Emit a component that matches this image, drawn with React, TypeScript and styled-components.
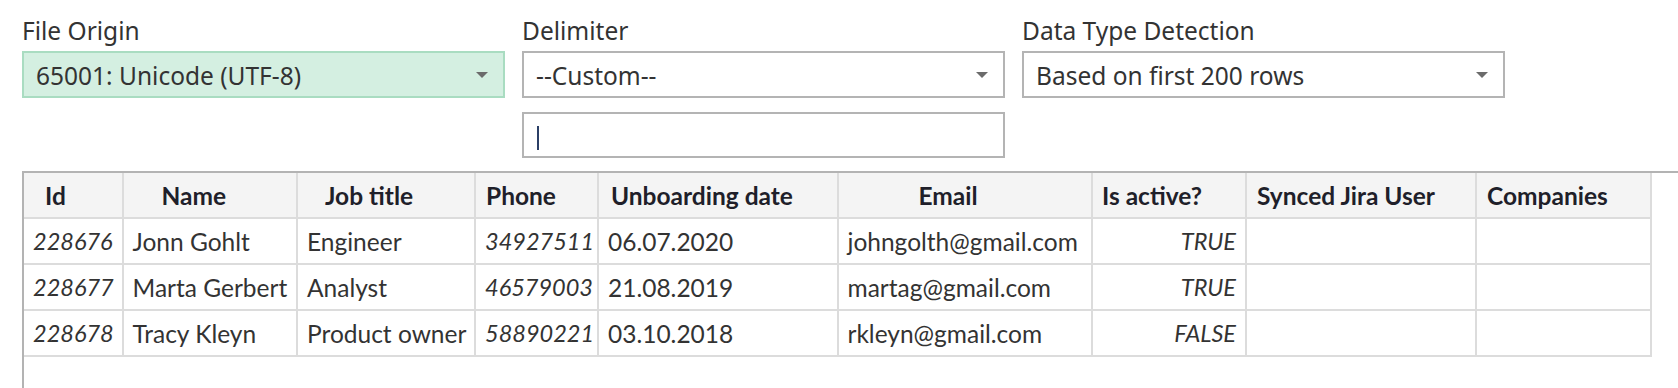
import { FC } from 'react'
import styled, { createGlobalStyle } from 'styled-components'

const GlobalStyle = createGlobalStyle`
  html, body {
    margin: 0;
    padding: 0;
    background: #ffffff;
  }

  body {
    font-family: 'Noto Sans', 'Open Sans', sans-serif;
    color: #333333;
  }
`

const Page = styled.main`
  width: 1678px;
  height: 388px;
  overflow: hidden;
  display: flex;
  flex-direction: column;
`

const Options = styled.section`
  display: flex;
  align-items: flex-start;
  gap: 17px;
  padding: 16px 0 13px 22px;
`

const Field = styled.div`
  display: flex;
  flex-direction: column;
  width: 483px;
`

const Label = styled.label`
  height: 31px;
  margin-bottom: 4px;
  font-size: 24.5px;
  line-height: 30px;
  color: #333333;
  white-space: nowrap;
`

const SelectBox = styled.div<{ $active?: boolean }>`
  position: relative;
  box-sizing: border-box;
  height: 47px;
  padding: 4px 40px 0 12px;
  border: 2px solid ${({ $active }) => ($active ? '#a9dcc1' : '#b4b4b4')};
  background: ${({ $active }) => ($active ? '#d4efe1' : '#ffffff')};
  font-size: 24.5px;
  line-height: 38px;
  white-space: nowrap;
`

const Arrow = styled.span`
  position: absolute;
  right: 15px;
  top: 19px;
  width: 0;
  height: 0;
  border-left: 6px solid transparent;
  border-right: 6px solid transparent;
  border-top: 6px solid #6b6b6b;
`

const TextInput = styled.div`
  box-sizing: border-box;
  height: 46px;
  margin-top: 14px;
  padding: 12px 0 0 13px;
  border: 2px solid #b4b4b4;
`

const Caret = styled.span`
  display: block;
  width: 2px;
  height: 24px;
  background: #2b3f66;
`

const Preview = styled.section`
  flex: 1;
  margin-left: 22px;
  border-top: 2px solid #b3b3b3;
  border-left: 2px solid #b3b3b3;
`

const Grid = styled.table<{ $width: number }>`
  width: ${({ $width }) => $width}px;
  border-collapse: collapse;
  table-layout: fixed;
  font-family: Lato, 'Noto Sans', sans-serif;
  font-size: 24.5px;
`

const HeadCell = styled.th<{ $pad: number }>`
  height: 44px;
  padding: 0 0 0 ${({ $pad }) => $pad}px;
  border: 2px solid #dcdcdc;
  border-top: none;
  background: #f4f4f4;
  color: #1f1f2a;
  font-weight: 700;
  text-align: left;
  white-space: nowrap;
  overflow: hidden;

  &:first-child {
    border-left: none;
  }
`

const Cell = styled.td<{ $num?: boolean }>`
  height: 44px;
  padding: 0 9px;
  border: 2px solid #dcdcdc;
  color: #333333;
  font-style: ${({ $num }) => ($num ? 'italic' : 'normal')};
  font-size: ${({ $num }) => ($num ? '23.5px' : '24.5px')};
  text-align: ${({ $num }) => ($num ? 'right' : 'left')};
  white-space: nowrap;
  overflow: hidden;

  &:first-child {
    border-left: none;
  }
`

type Column = {
  title: string
  width: number
  headPad: number
  num?: boolean
}

const columns: Column[] = [
  { title: 'Id', width: 98.5, headPad: 21, num: true },
  { title: 'Name', width: 174.5, headPad: 38 },
  { title: 'Job title', width: 178, headPad: 27 },
  { title: 'Phone', width: 123, headPad: 10, num: true },
  { title: 'Unboarding date', width: 239.5, headPad: 12 },
  { title: 'Email', width: 254.5, headPad: 80 },
  { title: 'Is active?', width: 154, headPad: 9, num: true },
  { title: 'Synced Jira User', width: 230, headPad: 10 },
  { title: 'Companies', width: 174.5, headPad: 10 },
]

const tableWidth = columns.reduce((sum, col) => sum + col.width, 0)

const rows: string[][] = [
  ['228676', 'Jonn Gohlt', 'Engineer', '34927511', '06.07.2020', 'johngolth@gmail.com', 'TRUE', '', ''],
  ['228677', 'Marta Gerbert', 'Analyst', '46579003', '21.08.2019', 'martag@gmail.com', 'TRUE', '', ''],
  ['228678', 'Tracy Kleyn', 'Product owner', '58890221', '03.10.2018', 'rkleyn@gmail.com', 'FALSE', '', ''],
]

const App: FC = () => (
  <Page>
    <GlobalStyle />
    <Options>
      <Field>
        <Label>File Origin</Label>
        <SelectBox $active>
          65001: Unicode (UTF-8)
          <Arrow />
        </SelectBox>
      </Field>

      <Field>
        <Label>Delimiter</Label>
        <SelectBox>
          --Custom--
          <Arrow />
        </SelectBox>
        <TextInput>
          <Caret />
        </TextInput>
      </Field>

      <Field>
        <Label>Data Type Detection</Label>
        <SelectBox>
          Based on first 200 rows
          <Arrow />
        </SelectBox>
      </Field>
    </Options>

    <Preview>
      <Grid $width={tableWidth}>
        <colgroup>
          {columns.map((col) => (
            <col key={col.title} style={{ width: col.width }} />
          ))}
        </colgroup>
        <thead>
          <tr>
            {columns.map((col) => (
              <HeadCell key={col.title} $pad={col.headPad}>
                {col.title}
              </HeadCell>
            ))}
          </tr>
        </thead>
        <tbody>
          {rows.map((row) => (
            <tr key={row[0]}>
              {row.map((value, i) => (
                <Cell key={columns[i].title} $num={columns[i].num}>
                  {value}
                </Cell>
              ))}
            </tr>
          ))}
        </tbody>
      </Grid>
    </Preview>
  </Page>
)

export default App
